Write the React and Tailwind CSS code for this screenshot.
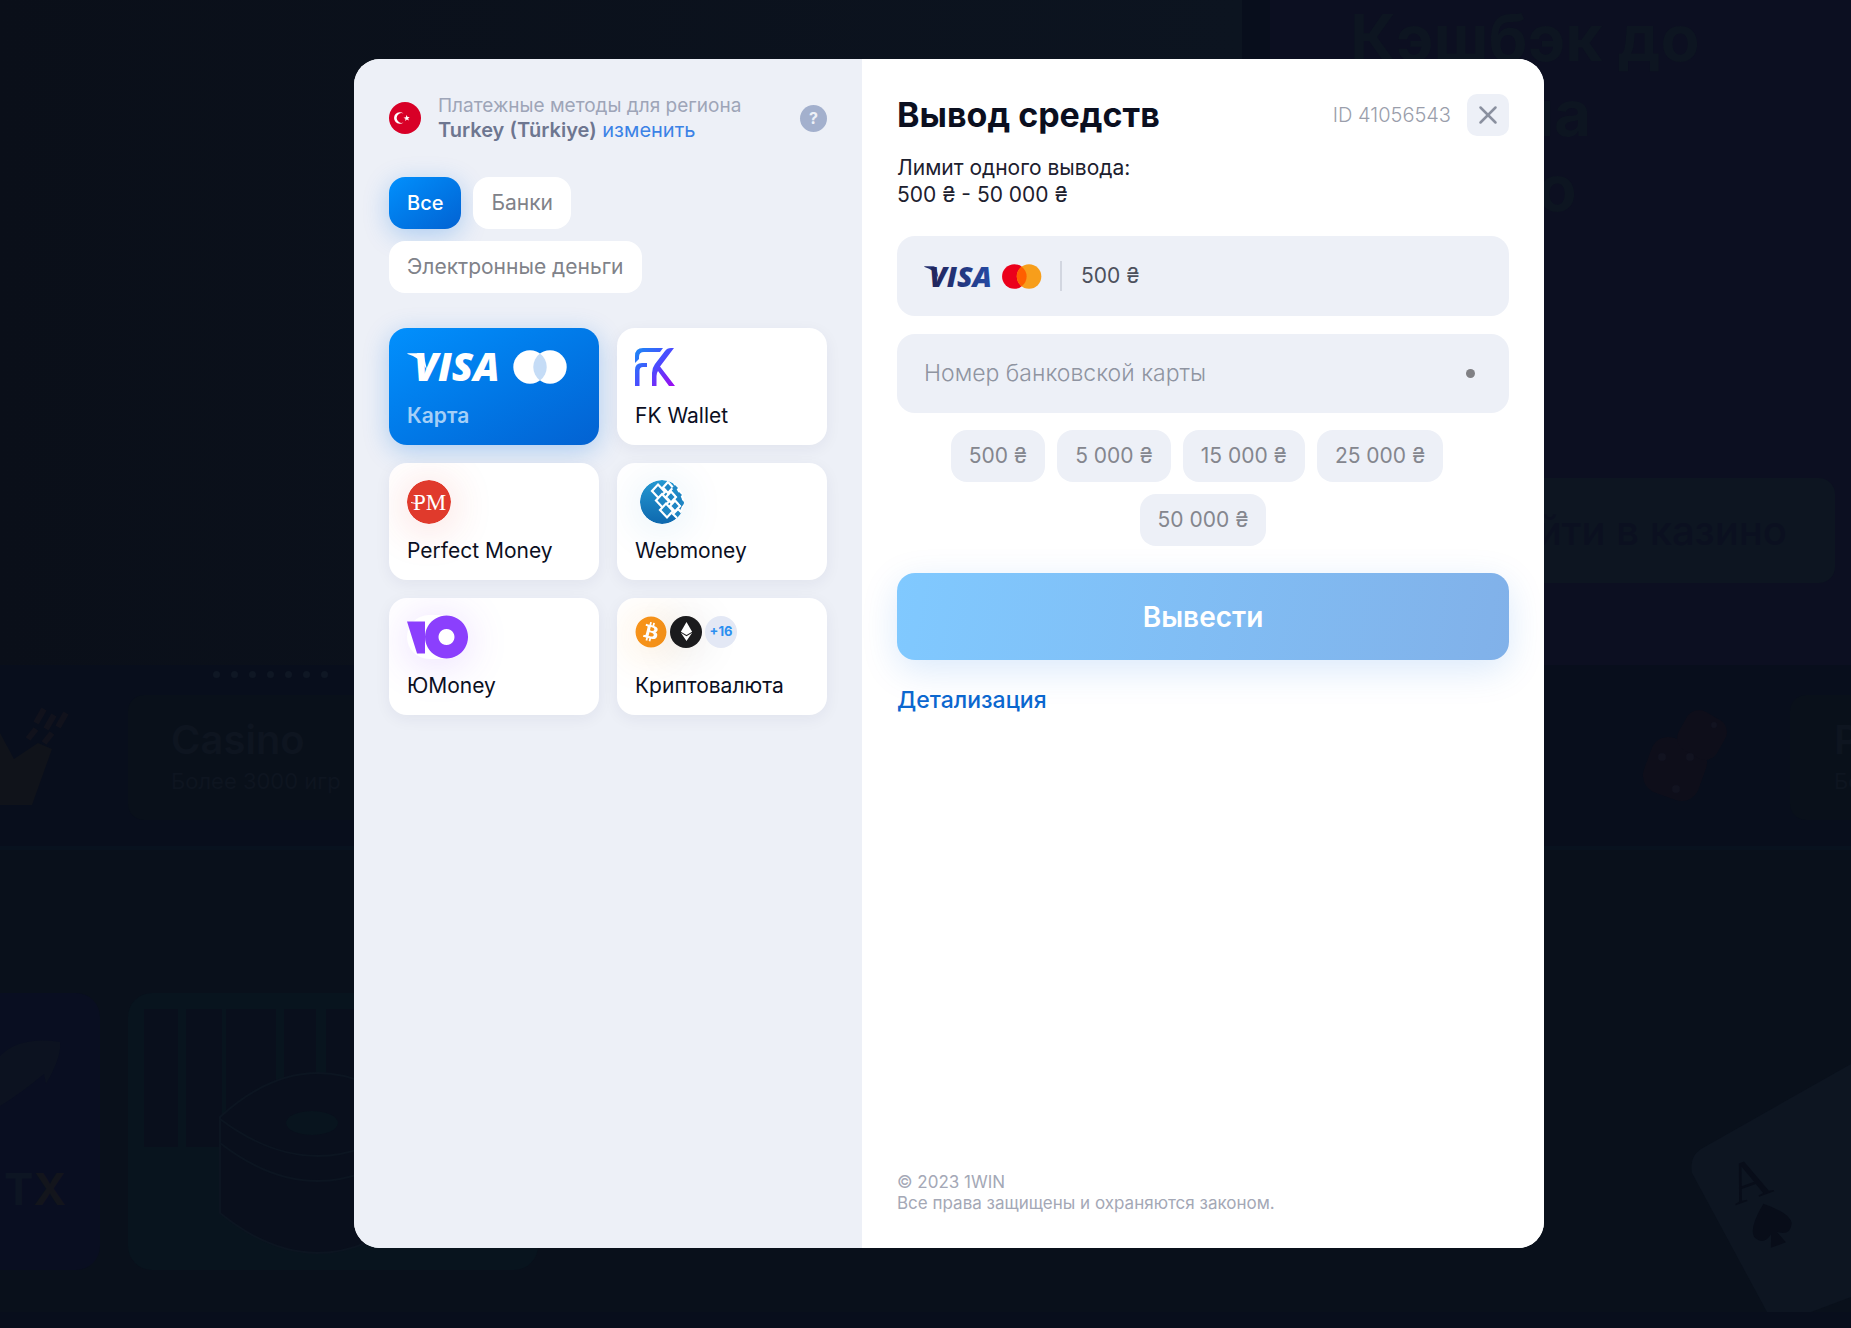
import { X } from "lucide-react";
import { FaBitcoin, FaEthereum } from "react-icons/fa";

const amounts = ["500 ₴", "5 000 ₴", "15 000 ₴", "25 000 ₴", "50 000 ₴"];

function CardBrands({ className, colored }) {
  return (
    <svg viewBox="0 0 162 34" className={className} role="img" aria-label="Visa, Mastercard">
      <defs>
        <linearGradient id="visaBlue" x1="0" y1="0" x2="1" y2="0">
          <stop offset="0" stopColor="#222357" />
          <stop offset="1" stopColor="#254aa5" />
        </linearGradient>
      </defs>
      <g fill={colored ? "url(#visaBlue)" : "#fff"}>
        <path d="M0 3.800 L1 3.200 H13 Q16 3.400 17 6.400 L20 20 Q15 8 0 3.800 Z" />
        <text
          x="7"
          y="31"
          className="font-['Open_Sans',sans-serif] text-[39px] font-extrabold italic"
        >
          VISA
        </text>
      </g>
      <circle cx="123" cy="17" r="16.700" fill={colored ? "#eb001b" : "#fff"} />
      <circle cx="143" cy="17" r="16.700" fill={colored ? "#f79e1b" : "#fff"} />
      <path
        d="M133 3.600 A16.700 16.700 0 0 1 133 30.400 A16.700 16.700 0 0 1 133 3.600 Z"
        fill={colored ? "#ff5f00" : "#c5dcf6"}
      />
    </svg>
  );
}

function FkLogo() {
  return (
    <svg viewBox="0 0 40 38" className="h-[38px] w-10" fill="none" aria-hidden="true">
      <defs>
        <linearGradient id="fk" x1="0" y1="0" x2="40" y2="38" gradientUnits="userSpaceOnUse">
          <stop offset="0" stopColor="#1a8bf5" />
          <stop offset="0.5" stopColor="#4a4cff" />
          <stop offset="1" stopColor="#a008f0" />
        </linearGradient>
      </defs>
      <g fill="url(#fk)">
        <path d="M0 15 V8 Q0 0 8 0 H28 L25 4 H9 Q4 4 4 9 V11 Z" />
        <path d="M0 38 V22 Q0 15 7 15 H12 V19 H8 Q4.500 19 4.500 23 V38 Z" />
        <path d="M17 38 V25 Q17 20 20 16 L30 3 Q32 0 36 0 H39 L25 18.500 L40 38 H34 L23 23 Q21.500 25 21.500 28 V38 Z" />
      </g>
    </svg>
  );
}

function PerfectMoneyLogo() {
  return (
    <svg
      viewBox="0 0 44 44"
      className="size-11 rounded-full shadow-[0_4px_44px_rgba(230,60,45,0.22)]"
      aria-hidden="true"
    >
      <circle cx="22" cy="22" r="22" fill="#e03a2c" />
      <text x="6" y="30" fill="#fff" className="font-['Liberation_Serif',serif] text-[23px]">
        PM
      </text>
      <path d="M4 22.500 Q9 25 16 22" stroke="#fff" strokeWidth="1" fill="none" />
    </svg>
  );
}

function WebmoneyLogo() {
  return (
    <svg
      viewBox="0 0 44 44"
      className="ml-[5px] size-11 rounded-full shadow-[0_4px_44px_rgba(20,130,200,0.14)]"
      aria-hidden="true"
    >
      <defs>
        <linearGradient id="wm" x1="0" y1="0" x2="0" y2="1">
          <stop offset="0" stopColor="#2599d2" />
          <stop offset="1" stopColor="#0e68ae" />
        </linearGradient>
      </defs>
      <path d="M22 0 Q28 0 33 3 L44 22 L36 39 Q30 44 22 44 A22 22 0 0 1 22 0 Z" fill="url(#wm)" />
      <path d="M33 0 L44 0 V44 H35 L44 30 L40 10 Z" fill="#fff" />
      <g fill="#1f86c4" stroke="#fff" strokeWidth="2.200">
        <path d="M28 2 L33 7.500 L28 13 L23 7.500 Z" />
        <path d="M31 11.500 L36 17 L31 22.500 L26 17 Z" />
        <path d="M35 20.500 L40 26 L35 31.500 L30 26 Z" />
        <path d="M38 29 L43 34 L38 39 L33 34 Z" />
        <path d="M18 4.500 L25 12 L19 18.500 L12 11 Z" />
        <path d="M22 14 L29 21.500 L23 28 L16 20.500 Z" />
        <path d="M26 23.500 L33 31 L27 37.500 L20 30 Z" />
      </g>
      <g fill="#1f86c4">
        <path d="M35 5 L38 8 L35 11 L32 8 Z" />
        <path d="M39 12 L42 15 L39 18 L36 15 Z" />
        <path d="M42 20 L45 23 L42 26 L39 23 Z" />
      </g>
    </svg>
  );
}

function YooMoneyLogo() {
  return (
    <span className="flex rounded-full shadow-[0_4px_44px_rgba(139,63,253,0.20)]">
      <svg viewBox="0 0 61 44" className="h-11 w-[61px]" fill="#8b3ffd" aria-hidden="true">
        <path d="M0 6.500 H18 V38.500 H10 Z" />
        <path
          fillRule="evenodd"
          d="M39.500 0.500 a21.500 21.500 0 1 0 0.010 0 Z M39.500 14 a8 8 0 1 1 -0.010 0 Z"
        />
      </svg>
    </span>
  );
}

function CryptoLogos() {
  return (
    <span className="flex gap-[3px] self-start pt-px">
      <span className="rounded-full bg-white shadow-[0_4px_44px_rgba(247,147,26,0.28)]">
        <FaBitcoin className="size-8 text-[#f7931a]" />
      </span>
      <span className="flex size-8 items-center justify-center rounded-full bg-[#1b1b1d] text-white shadow-[0_4px_44px_rgba(0,0,0,0.14)]">
        <FaEthereum className="size-[19px]" />
      </span>
      <span className="flex size-8 items-center justify-center rounded-full bg-[#e3e8f5] text-[13px] font-bold text-[#2b8ff0]">
        +16
      </span>
    </span>
  );
}

const methods = [
  { name: "Карта", logo: <CardBrands className="h-[34px] w-[162px] overflow-visible" />, active: true },
  { name: "FK Wallet", logo: <FkLogo /> },
  { name: "Perfect Money", logo: <PerfectMoneyLogo /> },
  { name: "Webmoney", logo: <WebmoneyLogo /> },
  { name: "ЮMoney", logo: <YooMoneyLogo /> },
  { name: "Криптовалюта", logo: <CryptoLogos /> },
];

function PageBehind() {
  return (
    <div className="flex min-h-screen flex-col bg-[#080e1c]" aria-hidden="true">
      {/* Banners */}
      <div className="flex h-[665px] gap-7">
        <div className="flex-1 bg-linear-to-r from-[#0a0f19] to-[#0c1420]" />
        <div className="flex w-[581px] flex-col justify-between bg-[#0c0f21] pb-[82px] pl-20 text-[#0d1521]">
          <p className="text-[64px] leading-[75px] font-bold">
            Кэшбэк до
            <br />
            50% на
            <br />
            казино
          </p>
          <div className="mr-4 flex h-[105px] items-center justify-end rounded-2xl bg-[#0d1521] pr-12 text-[40px] font-medium text-[#0b1020]">
            Перейти в казино
          </div>
        </div>
      </div>

      <div className="flex h-[30px] gap-[11px] pt-1.5 pl-[213px]">
        {[0, 1, 2, 3, 4, 5, 6].map((dot) => (
          <span key={dot} className="size-[7px] rounded-full bg-[#0f1724]" />
        ))}
      </div>

      {/* Categories */}
      <div className="flex h-[155px] items-start justify-between border-b-4 border-[#08121f]">
        <div className="flex">
          <svg viewBox="0 0 128 125" className="h-[125px] w-32" fill="#10131a">
            <path d="M0 38 L14 64 L38 48 L52 54 L32 110 H0 Z" />
            <path
              d="M36 28 l8 -14 M46 34 l8 -14 M58 32 l8 -14 M28 44 l8 -10 M44 48 l8 -10"
              stroke="#11121c"
              strokeWidth="6"
            />
          </svg>
          <div className="h-[125px] w-[600px] rounded-2xl bg-[#09101a] px-[43px] pt-5 text-[#0e1520]">
            <p className="text-[40px] leading-[50px] font-semibold">Casino</p>
            <p className="text-[22px] leading-8">Более 3000 игр</p>
          </div>
        </div>
        <div className="flex">
          <svg viewBox="0 0 180 125" className="h-[125px] w-[180px]" fill="#0e0e1a">
            <rect x="36" y="45" width="58" height="58" rx="18" transform="rotate(20 65 74)" />
            <rect x="70" y="18" width="44" height="44" rx="14" transform="rotate(30 92 40)" />
            <g fill="#121320">
              <circle cx="52" cy="62" r="4" />
              <circle cx="80" cy="62" r="4" />
              <circle cx="66" cy="94" r="4" />
              <circle cx="104" cy="30" r="3" />
            </g>
          </svg>
          <div className="h-[125px] w-[61px] overflow-hidden rounded-l-2xl bg-[#09101a] pt-5 pl-11 whitespace-nowrap text-[#0e1520]">
            <p className="text-[40px] leading-[50px] font-semibold">Poker</p>
            <p className="text-[22px] leading-8">Более</p>
          </div>
        </div>
      </div>

      {/* Games */}
      <div className="mb-4 flex flex-1">
        <div className="flex flex-1 gap-7 bg-[#09101b] pt-[143px]">
          <div className="flex h-[277px] w-[100px] flex-col justify-end overflow-hidden rounded-r-3xl bg-[#090e21]">
            <svg viewBox="0 0 100 90" className="mb-10 h-[90px] w-[100px]" fill="#0c1220">
              <path d="M0 22 Q20 2 60 8 Q62 22 46 50 L44 40 Q20 60 0 72 Z" />
            </svg>
            <p className="mb-14 pl-1 text-[44px] leading-[50px] font-bold text-[#0d1523]">
              T<span className="text-[#13151c]">X</span>
            </p>
          </div>
          <div className="h-[277px] w-[410px] overflow-hidden rounded-3xl bg-[#08141e]">
            <svg viewBox="0 0 410 277" className="h-full w-full" fill="#090f1c">
              <path d="M16 16 h34 v138 h-34 Z M58 16 h36 v138 h-36 Z M98 16 h50 v138 h-50 Z M156 16 h32 v138 h-32 Z M198 16 h60 v138 h-60 Z" />
              <path
                d="M92 124 Q140 80 190 80 Q240 80 286 124 V220 Q190 300 92 220 Z"
                stroke="#0c1521"
                strokeWidth="2"
              />
              <path d="M92 126 Q190 200 286 126 M92 150 Q190 226 286 150" fill="none" stroke="#0c1521" strokeWidth="2" />
              <ellipse cx="184" cy="130" rx="26" ry="12" fill="#08141e" />
            </svg>
          </div>
        </div>
        <div className="flex flex-1 items-end justify-end bg-[#09101b]">
          <svg viewBox="0 0 170 251" className="h-[251px] w-[170px]">
            <path d="M170 3 L20 88 Q8 96 11 112 L86 251 H130 L170 236 Z" fill="#0d1521" />
            <g transform="rotate(-20 68 115)" fill="#080d19">
              <text x="45" y="138" className="font-['Liberation_Serif',serif] text-[58px]">
                A
              </text>
              <path d="M72 146 Q94 164 92 174 Q86 186 75 177 L80 190 H64 L69 177 Q58 186 52 174 Q50 164 72 146 Z" />
            </g>
          </svg>
        </div>
      </div>
    </div>
  );
}

function RegionHeader() {
  return (
    <div className="flex items-center">
      <svg viewBox="0 0 32 32" className="size-8 shrink-0" aria-hidden="true">
        <circle cx="16" cy="16" r="16" fill="#d80027" />
        <path d="M14.500 11.500 A5.800 5.800 0 1 0 14.500 20.500 A4.900 4.900 0 1 1 14.500 11.500 Z" fill="#fff" />
        <path
          d="M17.600 12.900 L18.500 15.100 L20.700 15 L19.100 16.500 L20 18.600 L17.900 17.500 L16.200 19 L16.500 16.700 L14.500 15.700 L16.800 15.200 Z"
          fill="#fff"
        />
      </svg>
      <div className="ml-[17px] flex-1 leading-[25px]">
        <p className="text-[19px] leading-[25px] text-[#9ea5b8]">Платежные методы для региона</p>
        <p className="text-xl leading-[25px]">
          <span className="font-semibold text-[#6d7690]">Turkey (Türkiye)</span>{" "}
          <a href="#region" className="text-[#3b82e6]">
            изменить
          </a>
        </p>
      </div>
      <button
        type="button"
        aria-label="Помощь"
        className="size-[27px] shrink-0 rounded-full bg-[#a3b0cd] text-base leading-none font-bold text-[#edf0f7]"
      >
        ?
      </button>
    </div>
  );
}

function MethodsPanel() {
  return (
    <aside className="w-[508px] shrink-0 bg-[#edf0f7] px-[35px] pt-[34px]">
      <RegionHeader />

      <div className="mt-[34px] flex flex-wrap gap-3 pr-16 text-[21px]">
        <button
          type="button"
          className="h-[52px] rounded-2xl bg-linear-to-br from-[#0290fd] to-[#0362d2] px-[18px] text-xl font-medium text-white shadow-[0_6px_26px_rgba(3,110,225,0.28)]"
        >
          Все
        </button>
        <button type="button" className="h-[52px] rounded-2xl bg-white px-[18px] text-[#808289]">
          Банки
        </button>
        <button type="button" className="h-[52px] rounded-2xl bg-white px-[18px] text-[#808289]">
          Электронные деньги
        </button>
      </div>

      <div className="mt-[35px] grid grid-cols-2 gap-[18px]">
        {methods.map(({ name, logo, active }) => (
          <button
            key={name}
            type="button"
            className={
              active
                ? "h-[117px] rounded-[18px] bg-linear-to-br from-[#0290fd] to-[#0362d2] px-[18px] text-left text-[21px] font-semibold text-[#a5cff7] shadow-[0_6px_26px_rgba(3,110,225,0.28)]"
                : "h-[117px] overflow-hidden rounded-[18px] bg-white px-[18px] text-left text-[21px] text-[#0b0f1f] shadow-[0_4px_16px_rgba(30,40,80,0.06)]"
            }
          >
            <span className="flex h-11 items-center">{logo}</span>
            <span className="mt-[14px] block leading-[26px]">{name}</span>
          </button>
        ))}
      </div>
    </aside>
  );
}

function WithdrawPanel() {
  return (
    <main className="flex flex-1 flex-col bg-white p-[35px] pb-[34px]">
      <div className="flex items-center">
        <h1 className="flex-1 text-[34px] leading-[42px] font-bold text-[#0b0f1f]">Вывод средств</h1>
        <span className="text-xl font-light text-[#9a9eab]">ID 41056543</span>
        <button
          type="button"
          aria-label="Закрыть"
          className="ml-4 flex size-[42px] items-center justify-center rounded-[10px] bg-[#edf0f7] text-[#8a909f]"
        >
          <X size={30} strokeWidth={2} />
        </button>
      </div>

      <p className="mt-[18px] text-[21px] leading-[27px] text-[#1c202e]">
        Лимит одного вывода:
        <br />
        500 ₴ - 50 000 ₴
      </p>

      <label className="mt-7 flex h-20 items-center rounded-[18px] bg-[#edf0f7] px-[27px]">
        <CardBrands colored className="h-[25px] w-[119px] shrink-0 overflow-visible" />
        <span className="ml-[17px] h-[30px] w-0.5 bg-[#d2d6e0]" />
        <input
          type="text"
          aria-label="Сумма"
          defaultValue="500 ₴"
          className="ml-[19px] min-w-0 flex-1 bg-transparent text-[21px] text-[#4c505c] outline-none"
        />
      </label>

      <label className="mt-[18px] flex h-[79px] items-center rounded-[18px] bg-[#edf0f7] pr-[34px] pl-[27px]">
        <input
          type="text"
          aria-label="Номер банковской карты"
          placeholder="Номер банковской карты"
          className="min-w-0 flex-1 bg-transparent text-[23px] font-light outline-none placeholder:text-[#8f94a1]"
        />
        <span className="size-[9px] rounded-full bg-[#808084]" />
      </label>

      <div className="mt-[17px] flex flex-wrap justify-center gap-y-3">
        {amounts.map((amount) => (
          <button
            key={amount}
            type="button"
            className="mr-3 h-[52px] rounded-2xl bg-[#edf0f7] px-[18px] text-[21px] text-[#84868e] last:mr-0"
          >
            {amount}
          </button>
        ))}
      </div>

      <button
        type="submit"
        className="mt-[27px] h-[87px] rounded-[18px] bg-[linear-gradient(100deg,#80c9ff,#81b1e9)] text-[28px] font-semibold text-white shadow-[0_10px_36px_rgba(3,110,225,0.15)]"
      >
        Вывести
      </button>

      <a href="#details" className="mt-[26px] self-start text-[23px] leading-7 font-medium text-[#0b67cf]">
        Детализация
      </a>

      <footer className="mt-auto text-[17px] leading-[21px] text-[#a4a8b6]">
        © 2023 1WIN
        <br />
        Все права защищены и охраняются законом.
      </footer>
    </main>
  );
}

export default function App() {
  return (
    <div className="relative min-h-screen overflow-hidden font-[Inter,sans-serif]">
      <PageBehind />
      <div className="absolute inset-0 flex justify-center pt-[59px] pb-20 pl-[47px]">
        <div className="flex w-full max-w-[1190px] overflow-hidden rounded-[26px] bg-white">
          <MethodsPanel />
          <WithdrawPanel />
        </div>
      </div>
    </div>
  );
}
